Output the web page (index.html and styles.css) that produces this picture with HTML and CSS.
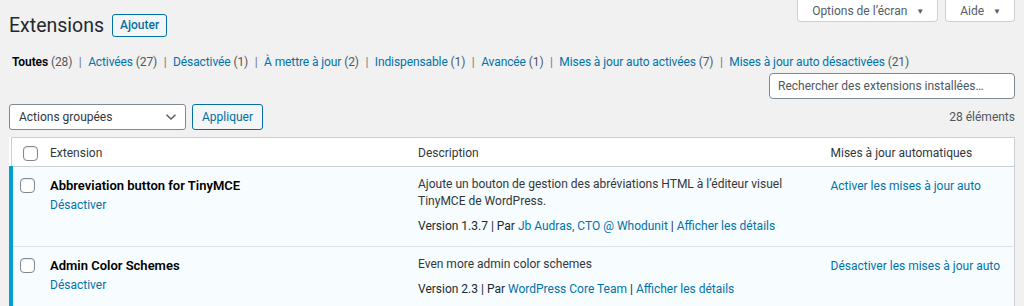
FILE: index.html
```html
<!DOCTYPE html>
<html>
<head>
    <title>Extensions</title>
    <link rel="stylesheet" href="styles.css">
</head>
<body>
    <div class="wrap">
        <div class="top-bar">
            <div class="title-group">
                <h1>Extensions</h1>
                <a href="#" class="title-action">Ajouter</a>
            </div>
            <div class="screen-tabs">
                <button class="screen-tab">Options de l’écran <span class="arrow">▼</span></button>
                <button class="screen-tab">Aide <span class="arrow">▼</span></button>
            </div>
        </div>

        <ul class="subsubsub">
            <li class="current">Toutes <span class="count">(28)</span></li>
            <li><a href="#">Activées <span class="count">(27)</span></a></li>
            <li><a href="#">Désactivée <span class="count">(1)</span></a></li>
            <li><a href="#">À mettre à jour <span class="count">(2)</span></a></li>
            <li><a href="#">Indispensable <span class="count">(1)</span></a></li>
            <li><a href="#">Avancée <span class="count">(1)</span></a></li>
            <li><a href="#">Mises à jour auto activées <span class="count">(7)</span></a></li>
            <li><a href="#">Mises à jour auto désactivées <span class="count">(21)</span></a></li>
        </ul>

        <div class="search-row">
            <input type="search" class="search-input" placeholder="Rechercher des extensions installées…">
        </div>

        <div class="tablenav">
            <div class="bulk-actions">
                <div class="select">
                    <span>Actions groupées</span>
                    <svg width="12" height="8" viewBox="0 0 12 8"><path d="M1.5 1.8 L6 6 L10.5 1.8" fill="none" stroke="#555d66" stroke-width="1.5"/></svg>
                </div>
                <button class="button">Appliquer</button>
            </div>
            <div class="displaying-num">28 éléments</div>
        </div>

        <table class="plugins">
            <thead>
                <tr>
                    <th class="check-column"><span class="checkbox"></span></th>
                    <th class="column-name">Extension</th>
                    <th class="column-description">Description</th>
                    <th class="column-auto">Mises à jour automatiques</th>
                </tr>
            </thead>
            <tbody>
                <tr class="active">
                    <th class="check-column"><span class="checkbox"></span></th>
                    <td class="column-name">
                        <strong class="plugin-title">Abbreviation button for TinyMCE</strong>
                        <div class="row-actions"><a href="#">Désactiver</a></div>
                    </td>
                    <td class="column-description">
                        <p>Ajoute un bouton de gestion des abréviations HTML à l’éditeur visuel TinyMCE de WordPress.</p>
                        <div class="plugin-meta">Version 1.3.7 | Par <a href="#">Jb Audras, CTO @ Whodunit</a> | <a href="#">Afficher les détails</a></div>
                    </td>
                    <td class="column-auto"><a href="#">Activer les mises à jour auto</a></td>
                </tr>
                <tr class="active">
                    <th class="check-column"><span class="checkbox"></span></th>
                    <td class="column-name">
                        <strong class="plugin-title">Admin Color Schemes</strong>
                        <div class="row-actions"><a href="#">Désactiver</a></div>
                    </td>
                    <td class="column-description">
                        <p>Even more admin color schemes</p>
                        <div class="plugin-meta">Version 2.3 | Par <a href="#">WordPress Core Team</a> | <a href="#">Afficher les détails</a></div>
                    </td>
                    <td class="column-auto"><a href="#">Désactiver les mises à jour auto</a></td>
                </tr>
            </tbody>
        </table>
    </div>
</body>
</html>
```

FILE: styles.css
```css
* {
    margin: 0;
    padding: 0;
    box-sizing: border-box;
}

body {
    background-color: #f1f1f1;
    color: #23282d;
    font-family: Roboto, "Liberation Sans", sans-serif;
    font-size: 12px;
    line-height: 1.4;
}

a {
    color: #0073aa;
    text-decoration: none;
}

.wrap {
    padding: 0 9px;
}

.top-bar {
    display: flex;
    justify-content: space-between;
    align-items: flex-start;
}

.title-group {
    display: flex;
    align-items: center;
    gap: 8px;
    padding-top: 14px;
}

h1 {
    font-size: 19.5px;
    font-weight: 400;
    line-height: 22px;
    color: #23282d;
}

.title-action {
    display: inline-block;
    height: 23px;
    line-height: 21px;
    padding: 0 7px;
    border: 1px solid #0071a1;
    border-radius: 3px;
    background: #f3f5f6;
    color: #0071a1;
    font-weight: 500;
}

.screen-tabs {
    display: flex;
    gap: 7px;
}

.screen-tab {
    height: 22px;
    padding: 0 13px 0 14px;
    border: 1px solid #ccd0d4;
    border-top: none;
    border-radius: 0 0 4px 4px;
    background: #fff;
    color: #555d66;
    font-family: inherit;
    font-size: 12px;
}

.screen-tab .arrow {
    font-size: 8px;
    margin-left: 6px;
    vertical-align: 1px;
}

.subsubsub {
    list-style: none;
    display: flex;
    margin-top: 15px;
    padding-left: 3px;
    line-height: 20px;
    letter-spacing: -0.1px;
    color: #50575e;
}

.subsubsub li + li::before {
    content: "|";
    margin: 0 6.5px;
    color: #72777c;
}

.subsubsub .current {
    color: #000;
    font-weight: 600;
}

.subsubsub .count {
    color: #50575e;
    font-weight: 400;
}

.search-row {
    display: flex;
    justify-content: flex-end;
    margin-top: 1px;
}

.search-input {
    width: 246px;
    height: 26px;
    padding: 0 8px;
    border: 1px solid #7e8993;
    border-radius: 4px;
    background: #fff;
    font-family: inherit;
    font-size: 12px;
}

.search-input::placeholder {
    color: #50575e;
}

.tablenav {
    display: flex;
    justify-content: space-between;
    align-items: center;
    margin-top: 5px;
}

.bulk-actions {
    display: flex;
    gap: 6px;
}

.select {
    display: flex;
    justify-content: space-between;
    align-items: center;
    width: 177px;
    height: 26px;
    padding: 0 8px 0 9px;
    border: 1px solid #7e8993;
    border-radius: 3px;
    background: #fff;
    color: #32373c;
}

.button {
    height: 26px;
    padding: 0 9px;
    border: 1px solid #0071a1;
    border-radius: 3px;
    background: #f3f5f6;
    color: #0071a1;
    font-family: inherit;
    font-size: 12px;
}

.displaying-num {
    color: #50575e;
}

.plugins {
    width: 100%;
    margin-top: 7px;
    border: 1px solid #ccd0d4;
    border-collapse: collapse;
    background: #fff;
    table-layout: fixed;
}

.plugins thead th {
    height: 29px;
    padding: 2px 10px 0;
    border-bottom: 1px solid #ccd0d4;
    color: #32373c;
    font-weight: 400;
    text-align: left;
}

.plugins th.check-column {
    width: 29px;
    padding: 2px 0 0 11px;
}

.plugins .column-name {
    width: 368px;
}

.plugins .column-auto {
    width: 194px;
}

.plugins tbody th,
.plugins tbody td {
    vertical-align: top;
    padding: 9px 10px 10px;
    background: #f7fcfe;
    border-bottom: 1px solid #e2e4e7;
}

.plugins tbody th.check-column {
    padding: 11px 0 0 7px;
    border-left: 4px solid #00a0d2;
}

.checkbox {
    display: block;
    width: 15px;
    height: 15px;
    border: 1px solid #7e8993;
    border-radius: 4px;
    background: #fff;
    box-shadow: inset 0 1px 2px rgba(0,0,0,0.1);
}

.plugin-title {
    display: block;
    font-size: 13px;
    font-weight: 600;
    color: #000;
    line-height: 20px;
}

.row-actions {
    line-height: 18px;
}

.column-description p {
    line-height: 17px;
    margin-bottom: 6px;
    color: #32373c;
}

.plugin-meta {
    line-height: 20px;
    color: #23282d;
}

.plugins tbody .column-auto {
    line-height: 20px;
}
```
